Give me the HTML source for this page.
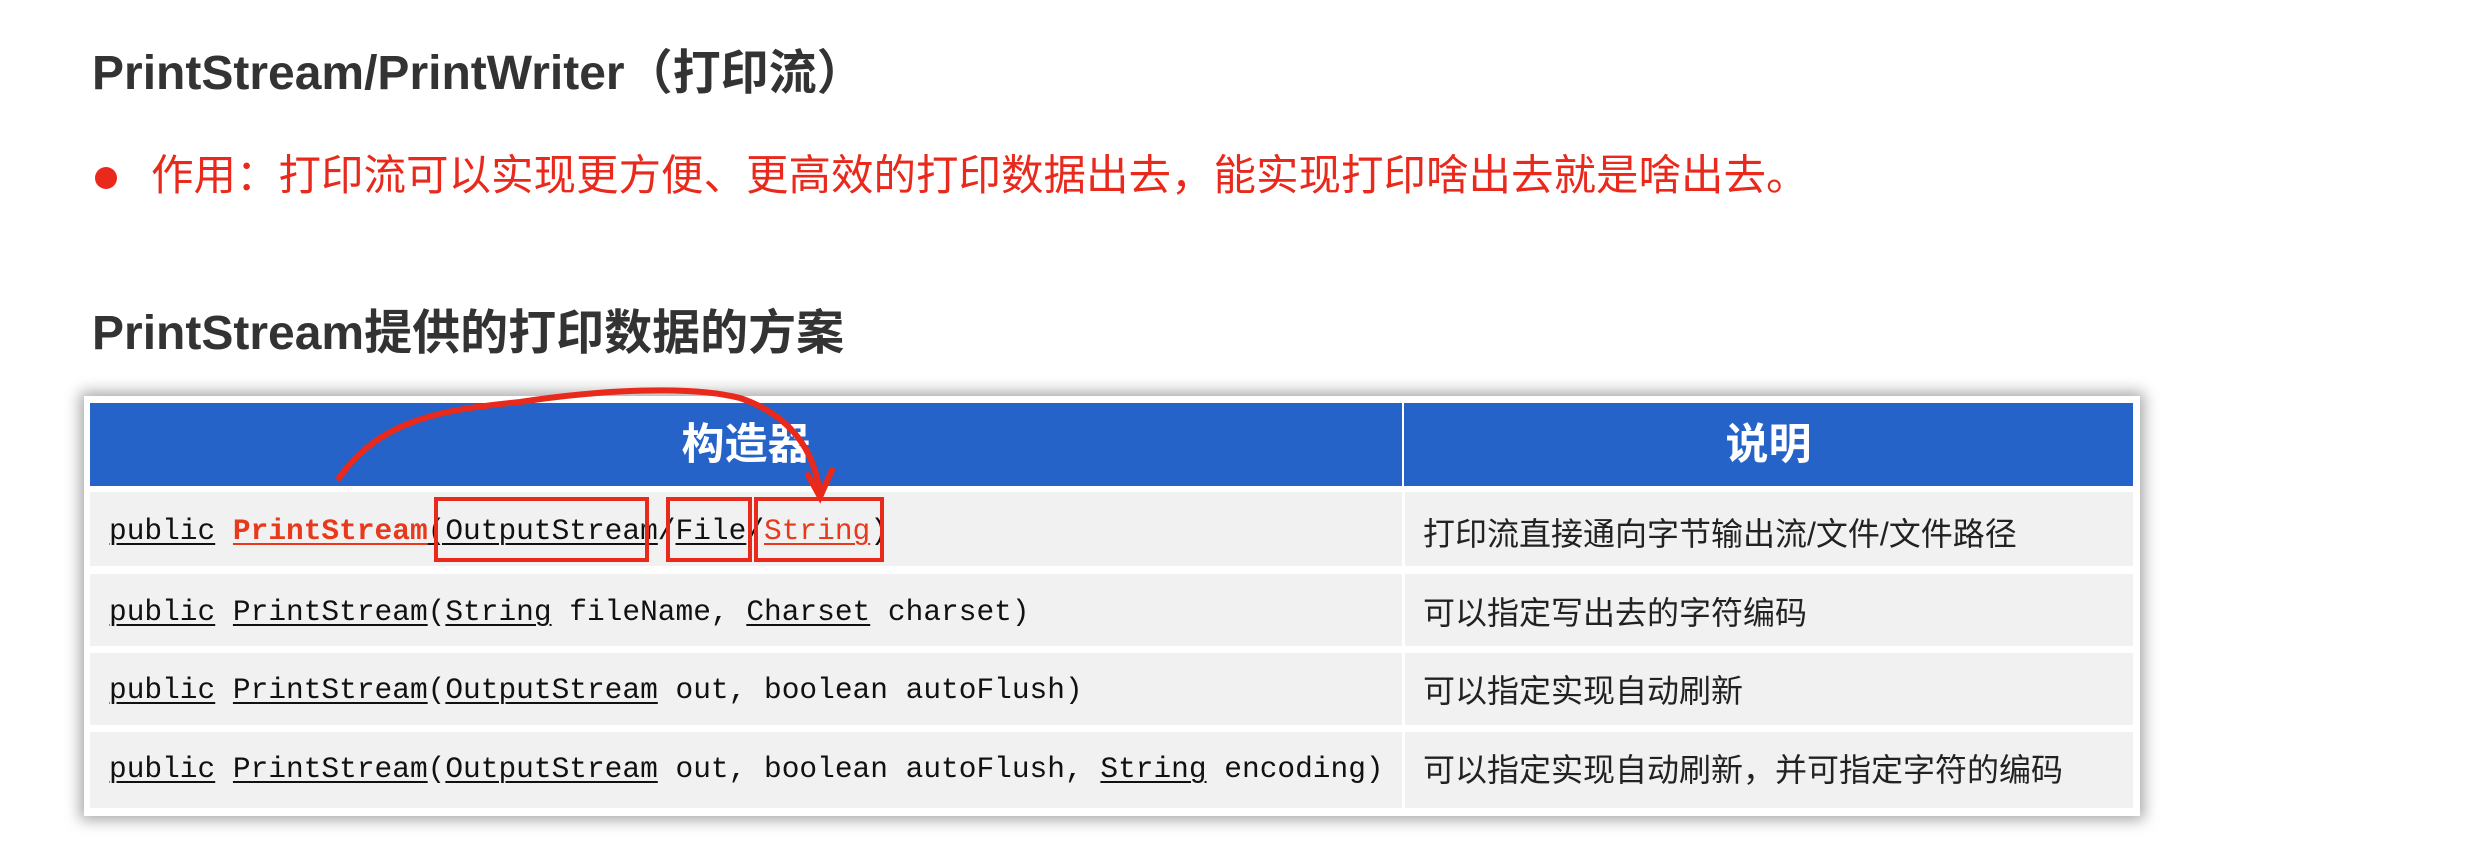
<!DOCTYPE html>
<html><head><meta charset="utf-8"><style>
body{margin:0;width:2474px;height:846px;background:#fff;position:relative;overflow:hidden;font-family:"Liberation Sans","Noto Sans CJK SC",sans-serif}
.a{position:absolute;white-space:nowrap}
.t{font-weight:bold;font-size:48px;color:#333;line-height:1}
.code{font-family:"Liberation Mono","Noto Sans CJK SC",monospace;font-size:29.5px;color:#111;line-height:1}
.u{text-decoration:underline;text-decoration-thickness:2px;text-underline-offset:4px}
.r{color:#e8391c}
.d{font-size:32px;color:#222;line-height:1}
.row{position:absolute;left:90px;width:2043px;background:#f1f1f1}
</style></head><body>
<div class="a t" style="left:92px;top:50px">PrintStream/PrintWriter（打印流）</div>
<div class="a" style="left:95px;top:167px;width:22px;height:22px;border-radius:50%;background:#e8291c"></div>
<div class="a" style="left:151px;top:156px;font-size:42.5px;color:#e8291c;line-height:1">作用：打印流可以实现更方便、更高效的打印数据出去，能实现打印啥出去就是啥出去。</div>
<div class="a t" style="left:92px;top:310px">PrintStream提供的打印数据的方案</div>

<div class="a" style="left:84px;top:396px;width:2056px;height:420px;box-shadow:0 0 14px 4px rgba(0,0,0,.35);background:#fff"></div>
<div class="a" style="left:90px;top:403px;width:1312px;height:83px;background:#2563c9"></div>
<div class="a" style="left:1404px;top:403px;width:729px;height:83px;background:#2563c9"></div>
<div class="a" style="left:90px;top:424px;width:1312px;text-align:center;color:#fff;font-weight:bold;font-size:43px;line-height:1">构造器</div>
<div class="a" style="left:1404px;top:424px;width:729px;text-align:center;color:#fff;font-weight:bold;font-size:43px;line-height:1">说明</div>

<div class="row" style="top:492px;height:74px"></div>
<div class="row" style="top:574px;height:72px"></div>
<div class="row" style="top:653px;height:72px"></div>
<div class="row" style="top:732px;height:76px"></div>
<div class="a" style="left:1402px;top:486px;width:3px;height:322px;background:#fff"></div>

<div class="a code" style="left:109px;top:517px"><span class="u">public</span> <span class="u r" style="font-weight:bold">PrintStream</span><span class="u">(OutputStream</span>/<span class="u">File</span>/<span class="u r">String</span>)</div>
<div class="a code" style="left:109px;top:598px"><span class="u">public</span> <span class="u">PrintStream</span>(<span class="u">String</span> fileName, <span class="u">Charset</span> charset)</div>
<div class="a code" style="left:109px;top:676px"><span class="u">public</span> <span class="u">PrintStream</span>(<span class="u">OutputStream</span> out, boolean autoFlush)</div>
<div class="a code" style="left:109px;top:755px"><span class="u">public</span> <span class="u">PrintStream</span>(<span class="u">OutputStream</span> out, boolean autoFlush, <span class="u">String</span> encoding)</div>

<div class="a d" style="left:1423px;top:518px">打印流直接通向字节输出流/文件/文件路径</div>
<div class="a d" style="left:1423px;top:597px">可以指定写出去的字符编码</div>
<div class="a d" style="left:1423px;top:675px">可以指定实现自动刷新</div>
<div class="a d" style="left:1423px;top:754px">可以指定实现自动刷新，并可指定字符的编码</div>

<div class="a" style="left:434px;top:497px;width:207px;height:57px;border:4px solid #e8291c"></div>
<div class="a" style="left:666px;top:497px;width:78px;height:57px;border:4px solid #e8291c"></div>
<div class="a" style="left:754px;top:497px;width:122px;height:57px;border:4px solid #e8291c"></div>
<svg class="a" style="left:0;top:0" width="2474" height="846"><path d="M339 478 C380 420 440 410 520 402 C600 390 690 385 740 398 C790 415 815 450 820 495 M808 475 L820 497 L832 470" fill="none" stroke="#e8291c" stroke-width="6" stroke-linecap="round"/></svg>
</body></html>
